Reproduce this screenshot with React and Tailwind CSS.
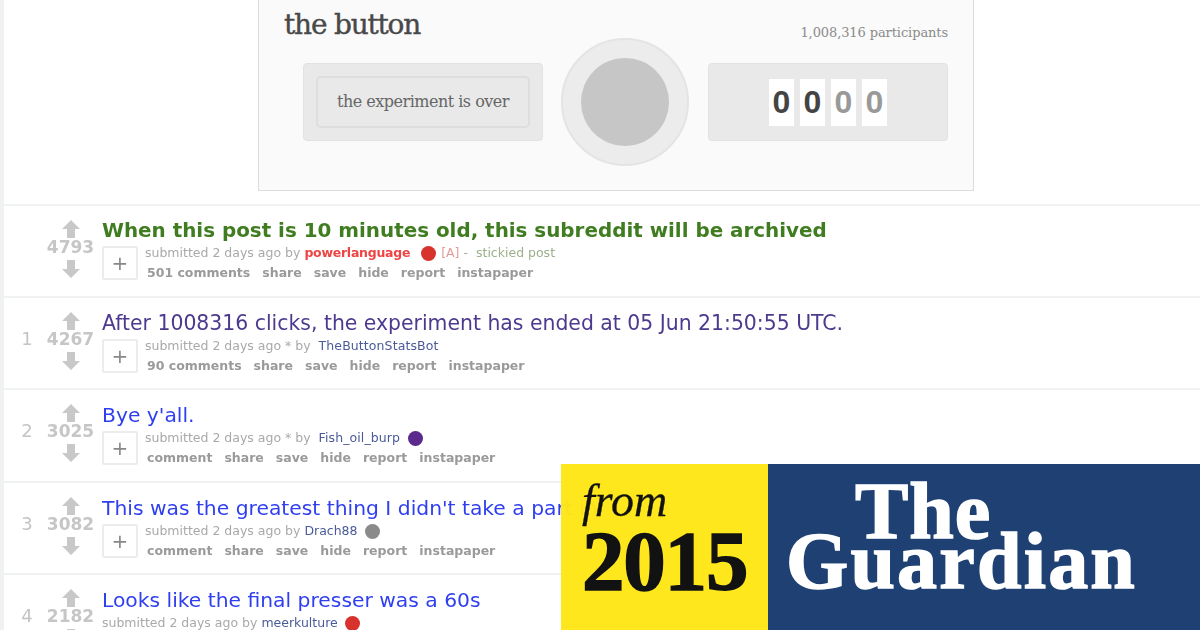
const posts = [
  {
    rank: '',
    score: 4793,
    title: 'When this post is 10 minutes old, this subreddit will be archived',
    titleClass: 'font-bold text-[#3f7d20] text-[19.9px]',
    starred: false,
    author: 'powerlanguage',
    authorClass: 'text-[#ee4444] font-bold tracking-[-0.25px]',
    dot: 'bg-[#d7322c]',
    dotClass: 'ml-[11px]',
    extra: true,
    comments: '501 comments',
    height: 'h-[92px]',
  },
  {
    rank: '1',
    score: 4267,
    title: 'After 1008316 clicks, the experiment has ended at 05 Jun 21:50:55 UTC.',
    titleClass: 'text-[#4d3a8e] text-[20.4px]',
    starred: true,
    author: 'TheButtonStatsBot',
    authorClass: 'text-[#4a5a9a] tracking-[0.1px]',
    comments: '90 comments',
    height: 'h-[92px]',
  },
  {
    rank: '2',
    score: 3025,
    title: "Bye y'all.",
    titleClass: 'text-[#2f3ff0] text-[20.3px]',
    starred: true,
    author: 'Fish_oil_burp',
    authorClass: 'text-[#4a5a9a] tracking-[0.1px]',
    dot: 'bg-[#5b2a8c]',
    dotClass: 'ml-[8px]',
    comments: 'comment',
    height: 'h-[93px]',
  },
  {
    rank: '3',
    score: 3082,
    title: "This was the greatest thing I didn't take a part in",
    titleClass: 'text-[#2f3ff0] text-[20.3px]',
    author: 'Drach88',
    authorClass: 'text-[#4a5a9a]',
    dot: 'bg-[#8a8a8a]',
    dotClass: 'ml-[7px]',
    comments: 'comment',
    height: 'h-[92px]',
  },
  {
    rank: '4',
    score: 2182,
    title: 'Looks like the final presser was a 60s',
    titleClass: 'text-[#2f3ff0] text-[20.3px]',
    author: 'meerkulture',
    authorClass: 'text-[#4a5a9a]',
    dot: 'bg-[#d7322c]',
    dotClass: 'ml-[7px]',
    comments: 'comment',
    height: 'h-[92px]',
    noThumb: true,
  },
];

function Arrow({ down }) {
  return (
    <svg width="18" height="18" viewBox="0 0 18 18" className={down ? 'rotate-180' : ''}>
      <path d="M9 0 L18 9 L13 9 L13 18 L5 18 L5 9 L0 9 Z" fill="#c8c8c8" />
    </svg>
  );
}

function Row({ post }) {
  return (
    <div className={`${post.height} flex border-b-2 border-[#f0f1f1] pt-[14px]`}>
      <div className="w-[44px] pt-[15px] pl-[2px] text-center text-[18px] leading-[24px] text-[#c4c4c4]">
        {post.rank}
      </div>
      <div className="w-[45px] mr-[1px] flex flex-col items-center">
        <Arrow />
        <div className="h-[22px] text-[17px] font-bold leading-[18px] text-[#c6c6c6]">{post.score}</div>
        <Arrow down />
      </div>
      <div className="ml-[8px] flex-1 min-w-0 -mt-[1px]">
        <div className="leading-[24px] whitespace-nowrap">
          <span className={post.titleClass}>{post.title}</span>
        </div>
        <div className="flex mt-[2px]">
          {!post.noThumb && (
            <div className="w-[36px] h-[34px] mr-[7px] border-2 border-[#ececec] flex items-center justify-center text-[20px] text-[#888888] rounded-[2px]">
              +
            </div>
          )}
          <div className="-mt-[2px]">
            <div className="flex items-center h-[19px] whitespace-nowrap text-[12.5px] text-[#a9a9a9]">
              <span className={post.starred ? 'mr-[4px]' : ''}>submitted 2 days ago{post.starred ? ' * ' : ' '}by&nbsp;</span>
              <span className={post.authorClass}>{post.author}</span>
              {post.dot && <span className={`${post.dotClass} w-[15px] h-[15px] rounded-full ${post.dot}`} />}
              {post.extra && (
                <span className="ml-[5px]">
                  <span className="text-[#e59a9a]">[A]</span> - <span className="ml-[4px] text-[#9bb08c]">stickied post</span>
                </span>
              )}
            </div>
            <div className="flex gap-[12px] ml-[2px] whitespace-nowrap text-[12.5px] font-bold leading-[19px] text-[#9a9a9a]">
              <span>{post.comments}</span>
              <span>share</span>
              <span>save</span>
              <span>hide</span>
              <span>report</span>
              <span>instapaper</span>
            </div>
          </div>
        </div>
      </div>
    </div>
  );
}

function ButtonWidget() {
  return (
    <div className="w-[716px] h-[191px] bg-[#fafafa] border-x border-b border-[#dcdcdc] pl-[25px] pr-[25px]">
      <div className="flex justify-between h-[38px]">
        <div className="font-['DejaVu_Serif'] text-[28px] leading-[50px] text-[#484848] tracking-[-1.2px] [-webkit-text-stroke:0.4px_#484848]">the button</div>
        <div className="font-['DejaVu_Serif'] text-[13px] pt-[25px] leading-[16px] text-[#8a8a8a] tracking-[-0.1px]">
          1,008,316 participants
        </div>
      </div>
      <div className="flex items-center ml-[19px] mt-[1px] h-[126px] justify-between">
        <div className="w-[240px] h-[78px] bg-[#e9e9e9] rounded-[4px] border border-[#e2e2e2] p-[12px]">
          <div className="h-full border-2 border-[#dedede] rounded-[5px] flex items-center justify-center font-['DejaVu_Serif'] text-[16px] text-[#666666] tracking-[-0.5px]">
            the experiment is over
          </div>
        </div>
        <div className="w-[128px] h-[128px] mr-[2px] rounded-full bg-[#ececec] border-2 border-[#e4e4e4] flex items-center justify-center">
          <div className="w-[88px] h-[88px] rounded-full bg-[#c6c6c6]" />
        </div>
        <div className="w-[240px] h-[78px] bg-[#e9e9e9] rounded-[4px] border border-[#e2e2e2] flex items-center justify-center gap-[6px]">
          {['#444444', '#444444', '#999999', '#999999'].map((color, i) => (
            <div
              key={i}
              style={{ color }}
              className="w-[25px] h-[47px] bg-white flex items-center justify-center font-['Liberation_Sans'] font-bold text-[32px]"
            >
              0
            </div>
          ))}
        </div>
      </div>
    </div>
  );
}

function GuardianBadge() {
  return (
    <div className="absolute left-[561px] top-[464px] w-[639px] h-[166px] flex font-['Liberation_Serif']">
      <div className="w-[207px] bg-[#ffe616]/[0.97] text-[#121212] pl-[21px]">
        <div className="italic text-[46px] leading-[40px] pt-[17px] h-[57px] [-webkit-text-stroke:0.3px_#121212]">from</div>
        <div className="font-bold text-[85px] leading-[80px] tracking-[-1.2px] [-webkit-text-stroke:1.5px_#121212]">2015</div>
      </div>
      <div className="flex-1 bg-[#1f4073] text-white font-bold text-[80px] leading-[50px] pl-[18px] pt-[22px] [-webkit-text-stroke:1.5px_white]">
        <div className="pl-[69px] tracking-[1px]">The</div>
        <div className="tracking-[2.2px]">Guardian</div>
      </div>
    </div>
  );
}

export default function App() {
  return (
    <div className="relative w-[1200px] h-[630px] overflow-hidden bg-white font-['DejaVu_Sans']">
      <div className="border-l-4 border-[#f0f1f1] blur-[0.6px]">
        <div className="h-[206px] border-b-2 border-[#f0f1f1] flex justify-center pl-[28px]">
          <ButtonWidget />
        </div>
        {posts.map((post) => (
          <Row key={post.score} post={post} />
        ))}
      </div>
      <GuardianBadge />
    </div>
  );
}
